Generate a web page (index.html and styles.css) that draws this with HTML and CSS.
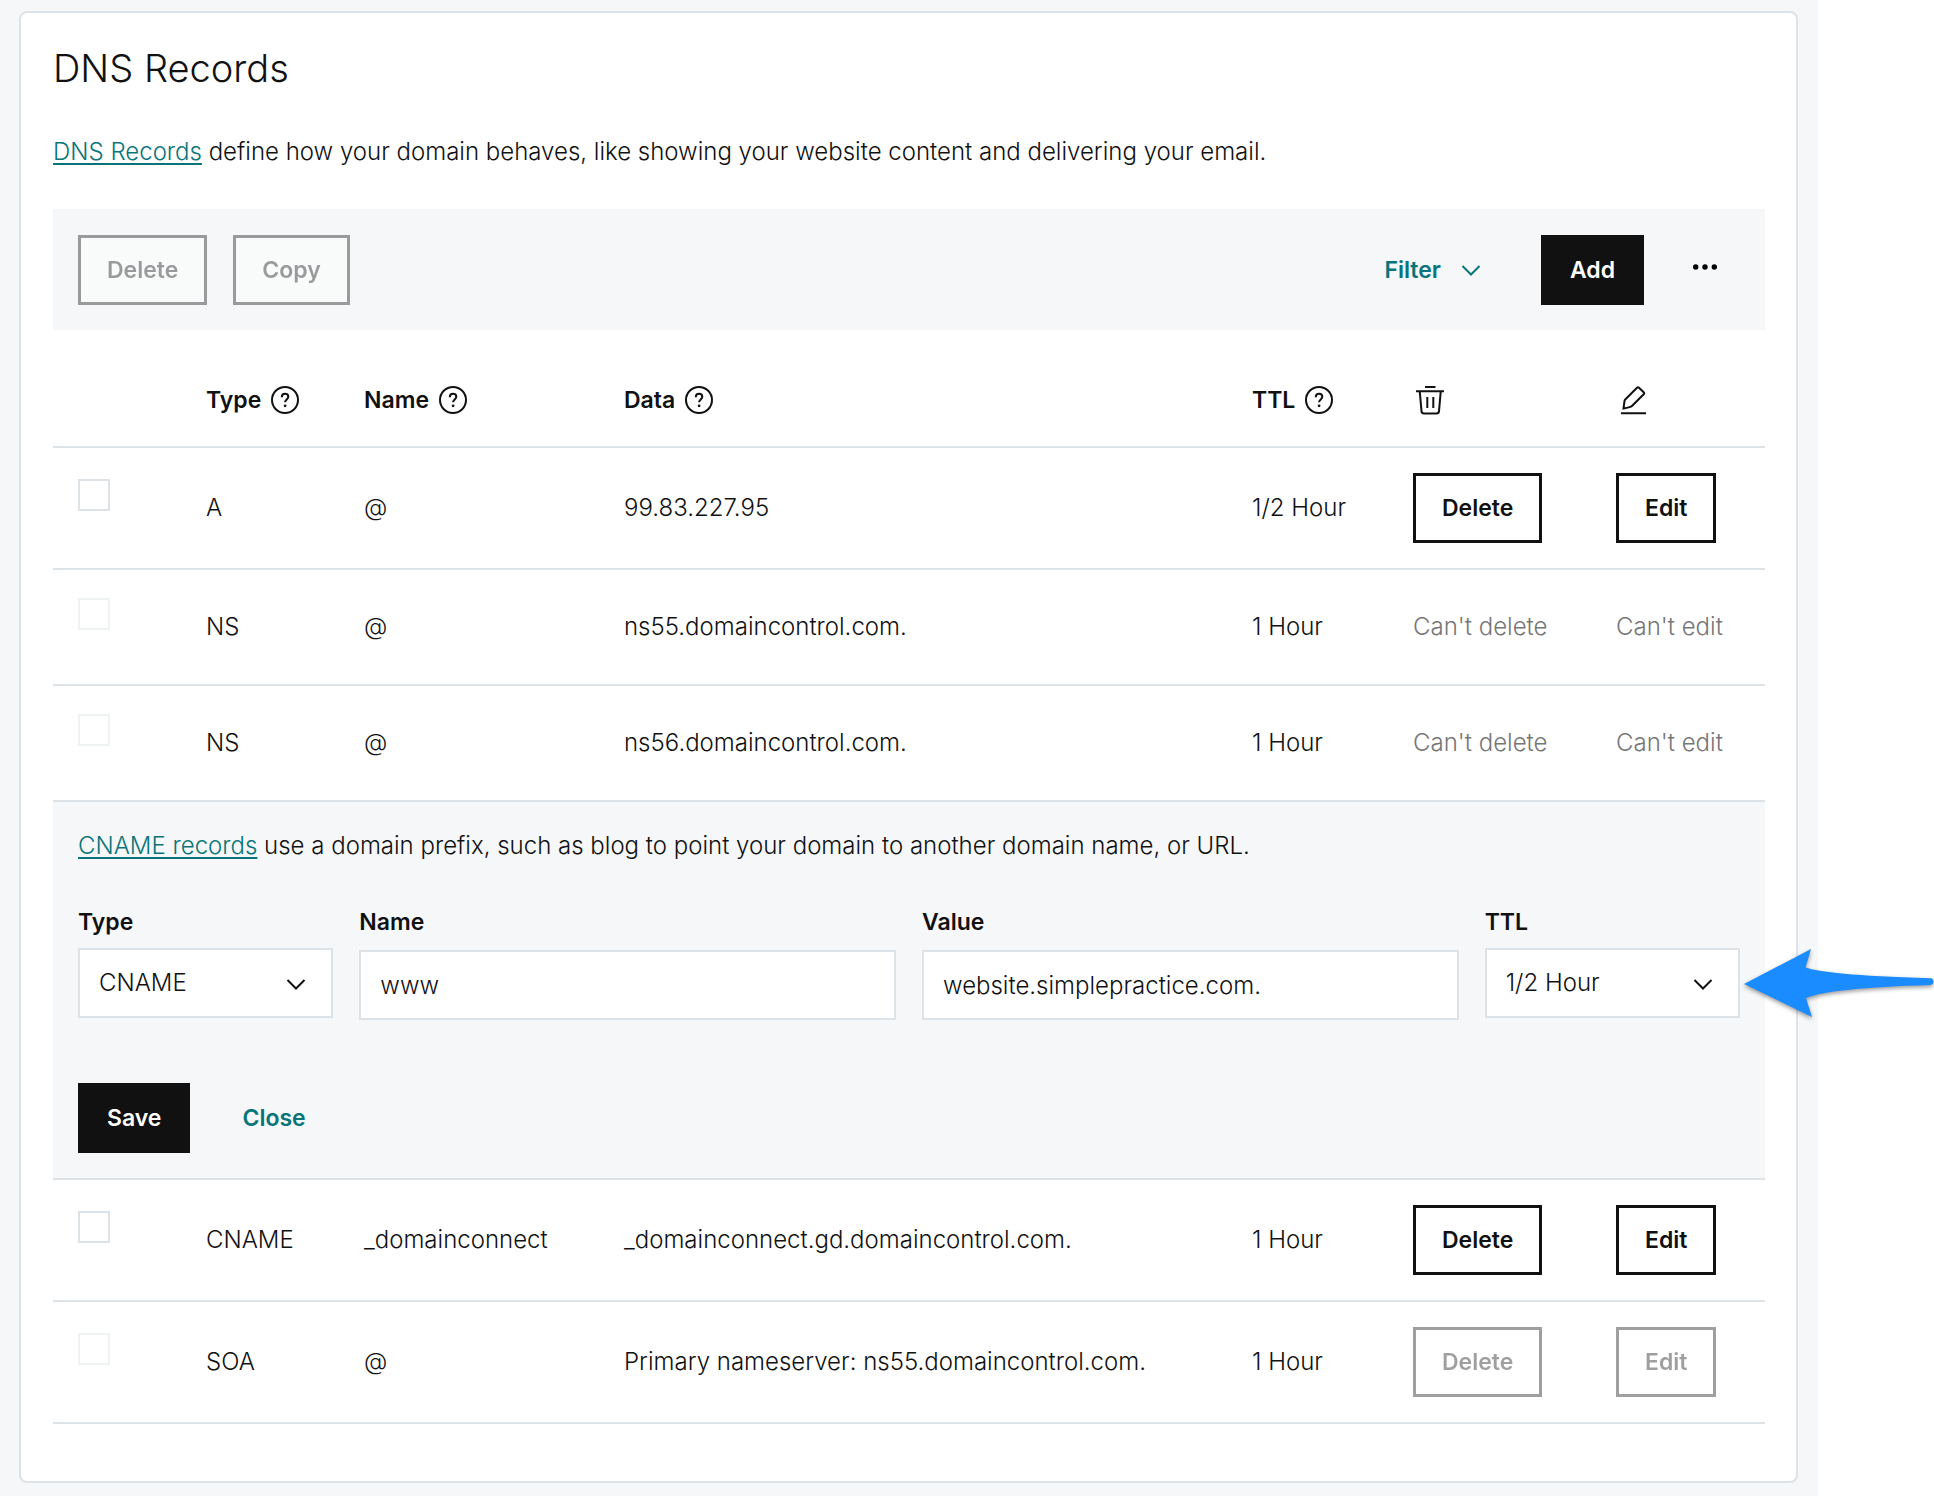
FILE: index.html
```html
<!DOCTYPE html>
<html lang="en">

<head>
    <meta charset="UTF-8">
    <meta name="viewport" content="width=device-width, initial-scale=1.0">
    <title>DNS Records</title>
    <link rel="stylesheet" href="styles.css">
</head>

<body>
    <!-- shared icons -->
    <svg class="sprite" aria-hidden="true">
        <symbol id="help" viewBox="0 0 28 28">
            <circle cx="14" cy="14" r="13" />
            <path d="M10.8 11.2c0-2 1.4-3.4 3.3-3.4s3.2 1.3 3.2 3c0 2.5-3.2 2.7-3.2 5.4" />
            <circle class="dot" cx="14.1" cy="19.8" r="1.4" />
        </symbol>
        <symbol id="chevron" viewBox="0 0 24 24">
            <path d="M3.5 8l8.5 8.5L20.5 8" />
        </symbol>
    </svg>

    <main class="page">
        <section class="card">
            <h1 class="title">DNS Records</h1>
            <p class="intro"><a href="#">DNS Records</a> define how your domain behaves, like showing your website content and delivering your email.</p>

            <div class="toolbar">
                <button type="button" class="btn" disabled>Delete</button>
                <button type="button" class="btn" disabled>Copy</button>
                <button type="button" class="btn-text filter">Filter <svg class="chevron"><use href="#chevron" /></svg></button>
                <button type="button" class="btn btn-primary">Add</button>
                <button type="button" class="btn-more" aria-label="More">
                    <svg viewBox="0 0 24 12"><circle cx="2.7" cy="3" r="2.7" /><circle cx="12" cy="3" r="2.7" /><circle cx="21.3" cy="3" r="2.7" /></svg>
                </button>
            </div>

            <table class="records">
                <colgroup>
                    <col class="col-check">
                    <col class="col-type">
                    <col class="col-name">
                    <col class="col-data">
                    <col class="col-ttl">
                    <col class="col-delete">
                    <col class="col-edit">
                </colgroup>
                <thead>
                    <tr>
                        <td></td>
                        <th><span class="head">Type <svg class="help"><use href="#help" /></svg></span></th>
                        <th><span class="head">Name <svg class="help"><use href="#help" /></svg></span></th>
                        <th><span class="head">Data <svg class="help"><use href="#help" /></svg></span></th>
                        <th><span class="head">TTL <svg class="help"><use href="#help" /></svg></span></th>
                        <th aria-label="Delete">
                            <svg class="icon" viewBox="0 0 32 32">
                                <path d="M12 3h10.5M3 7.3h28M6.8 7.8l1.7 19.4q.2 2.3 2.5 2.3h12.500q2.300 0 2.500-2.300l1.700-19.400M14.300 13v11M20.300 13v11" />
                            </svg>
                        </th>
                        <th aria-label="Edit">
                            <svg class="icon" viewBox="0 0 32 32">
                                <path d="M5 29.3h25M7.500 24.500l1-7.500q.2-1 1-1.800L21 3.700q1-1 2 0l4.700 4.500q1 1 0 2L16.200 21.700q-.8.8-1.800 1.200-2 .8-6.900 1.600z" />
                            </svg>
                        </th>
                    </tr>
                </thead>
                <tbody>
                    <tr>
                        <td><input type="checkbox" class="check" aria-label="Select A record"></td>
                        <td>A</td>
                        <td>@</td>
                        <td>99.83.227.95</td>
                        <td>1/2 Hour</td>
                        <td><button type="button" class="btn">Delete</button></td>
                        <td><button type="button" class="btn">Edit</button></td>
                    </tr>
                    <tr class="locked">
                        <td><input type="checkbox" class="check" aria-label="Select NS record" disabled></td>
                        <td>NS</td>
                        <td>@</td>
                        <td>ns55.domaincontrol.com.</td>
                        <td>1 Hour</td>
                        <td class="muted">Can't delete</td>
                        <td class="muted">Can't edit</td>
                    </tr>
                    <tr class="locked">
                        <td><input type="checkbox" class="check" aria-label="Select NS record" disabled></td>
                        <td>NS</td>
                        <td>@</td>
                        <td>ns56.domaincontrol.com.</td>
                        <td>1 Hour</td>
                        <td class="muted">Can't delete</td>
                        <td class="muted">Can't edit</td>
                    </tr>
                    <tr>
                        <td colspan="7" class="editor">
                            <form>
                                <p class="editor-text"><a href="#">CNAME records</a> use a domain prefix, such as blog to point your domain to another domain name, or URL.</p>
                                <div class="fields">
                                    <div class="field">
                                        <label for="type">Type</label>
                                        <div class="select">
                                            <select id="type">
                                                <option>CNAME</option>
                                            </select>
                                            <svg class="chevron"><use href="#chevron" /></svg>
                                        </div>
                                    </div>
                                    <div class="field field-wide">
                                        <label for="name">Name</label>
                                        <input type="text" id="name" value="www">
                                    </div>
                                    <div class="field field-wide">
                                        <label for="value">Value</label>
                                        <input type="text" id="value" value="website.simplepractice.com.">
                                    </div>
                                    <div class="field">
                                        <label for="ttl">TTL</label>
                                        <div class="select">
                                            <select id="ttl">
                                                <option>1/2 Hour</option>
                                            </select>
                                            <svg class="chevron"><use href="#chevron" /></svg>
                                            <svg class="pointer" viewBox="0 0 190 70">
                                                <path d="M0 35L67 0L61.5 18.5C75 23 110 27 186.5 29.2Q189.5 29.5 189.5 32.5Q189.5 35.5 186.5 36C120 38 80 42 62 49L68 68Z" />
                                            </svg>
                                        </div>
                                    </div>
                                </div>
                                <div class="actions">
                                    <button type="button" class="btn btn-primary">Save</button>
                                    <button type="button" class="btn-text">Close</button>
                                </div>
                            </form>
                        </td>
                    </tr>
                    <tr>
                        <td><input type="checkbox" class="check" aria-label="Select CNAME record"></td>
                        <td>CNAME</td>
                        <td>_domainconnect</td>
                        <td>_domainconnect.gd.domaincontrol.com.</td>
                        <td>1 Hour</td>
                        <td><button type="button" class="btn">Delete</button></td>
                        <td><button type="button" class="btn">Edit</button></td>
                    </tr>
                    <tr>
                        <td><input type="checkbox" class="check" aria-label="Select SOA record" disabled></td>
                        <td>SOA</td>
                        <td>@</td>
                        <td>Primary nameserver: ns55.domaincontrol.com.</td>
                        <td>1 Hour</td>
                        <td><button type="button" class="btn" disabled>Delete</button></td>
                        <td><button type="button" class="btn" disabled>Edit</button></td>
                    </tr>
                </tbody>
            </table>
        </section>
    </main>
</body>

</html>
```
FILE: styles.css
```css
* {
    box-sizing: border-box;
    margin: 0;
    padding: 0;
}

body {
    background-color: #fff;
    color: #111;
    font-family: Inter, "Liberation Sans", sans-serif;
    font-size: 24px;
    font-weight: 300;
    line-height: 32px;
    overflow-x: hidden;
}

a {
    color: #09757a;
    text-decoration-thickness: 2px;
    text-underline-offset: 3px;
}

.sprite {
    display: none;
}

.page {
    background-color: #f5f7f8;
    min-height: 100vh;
    margin-right: 116px;
    padding: 11px 20px 13px 19px;
}

.card {
    background-color: #fff;
    border: 2px solid #dce2e6;
    border-radius: 8px;
    padding: 31px 31px 57px 32px;
}

.title {
    font-size: 38px;
    font-weight: 300;
    line-height: 48px;
}

.intro {
    padding: 44px 0 41px;
}

/* buttons */
button,
input,
select {
    color: inherit;
    font: inherit;
}

.btn {
    background-color: #fff;
    border: 3px solid #111;
    font-size: 23px;
    font-weight: 600;
    height: 70px;
    padding: 0 26px;
}

.btn:disabled {
    opacity: .4;
}

.btn-primary {
    background-color: #111;
    color: #fff;
}

.btn-text {
    background: none;
    border: none;
    color: #09757a;
    font-size: 23px;
    font-weight: 600;
    height: 70px;
    padding: 0 26px;
}

.btn-more {
    background: none;
    border: none;
    height: 70px;
    width: 70px;
}

.btn-more svg {
    display: block;
    height: 12px;
    margin: 0 auto;
    width: 24px;
}

.toolbar {
    background-color: #f5f7f8;
    display: flex;
    gap: 26px;
    padding: 26px 25px 25px;
}

.filter {
    display: flex;
    align-items: center;
    gap: 18px;
    margin-left: auto;
    padding-right: 32px;
}

.chevron {
    width: 24px;
    height: 24px;
    fill: none;
    stroke: currentColor;
    stroke-width: 2;
}

/* records table */
.records {
    border-collapse: separate;
    border-spacing: 0;
    table-layout: fixed;
    width: 100%;
}

.col-check {
    width: 128px;
}

.col-type {
    width: 158px;
}

.col-name {
    width: 260px;
}

.col-ttl {
    width: 161px;
}

.col-delete {
    width: 203px;
}

.col-edit {
    width: 174px;
}

.records th,
.records td {
    border-bottom: 2px solid #dce2e6;
    height: 122px;
    padding: 0 0 0 25px;
    text-align: left;
    vertical-align: middle;
    white-space: nowrap;
}

.records thead th,
.records thead td {
    font-size: 23px;
    font-weight: 600;
    height: 118px;
    padding-top: 24px;
}

.records .locked td {
    height: 116px;
}

.records .muted {
    color: #767676;
}

.head {
    display: flex;
    align-items: center;
    gap: 10px;
}

.help {
    width: 28px;
    height: 28px;
    fill: none;
    stroke: #111;
    stroke-width: 2;
}

.dot {
    fill: #111;
    stroke: none;
}

.icon {
    display: block;
    width: 32px;
    height: 32px;
    fill: none;
    stroke: #111;
    stroke-width: 2;
}

.check {
    appearance: none;
    background-color: #fff;
    border: 2px solid #dce2e6;
    display: block;
    height: 32px;
    margin-bottom: 26px;
    width: 32px;
}

.check:disabled {
    opacity: .4;
}

/* inline record editor */
.records .editor {
    background-color: #f5f7f8;
    height: auto;
    padding: 28px 25px 25px;
    white-space: normal;
}

.fields {
    display: grid;
    grid-template-columns: repeat(12, 1fr);
    gap: 26px;
    padding: 44px 0 63px;
}

.field {
    grid-column: span 2;
}

.field-wide {
    grid-column: span 4;
}

.field label {
    display: block;
    font-size: 23px;
    font-weight: 600;
    padding-bottom: 10px;
}

.field input,
.field select {
    appearance: none;
    background-color: #fff;
    border: 2px solid #dce2e6;
    border-radius: 0;
    display: block;
    height: 70px;
    padding: 0 19px;
    width: 100%;
}

.field input {
    margin-top: 2px;
}

.select {
    position: relative;
}

.select .chevron {
    position: absolute;
    pointer-events: none;
    right: 25px;
    top: 24px;
}

/* arrow pointing at the TTL field */
.pointer {
    position: absolute;
    left: calc(100% + 4px);
    top: 1px;
    width: 190px;
    height: 70px;
    fill: #1a8cff;
    filter: drop-shadow(0 2px 2px rgba(0, 0, 0, .4));
    overflow: visible;
}

.actions {
    display: flex;
    gap: 26px;
}
```
